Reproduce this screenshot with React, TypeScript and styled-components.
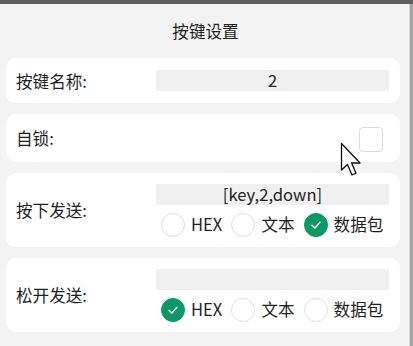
import React from "react";
import styled, { createGlobalStyle } from "styled-components";

const GlobalStyle = createGlobalStyle`
  html, body {
    margin: 0;
    padding: 0;
    background: #f3f3f3;
  }
  body {
    font-family: "Noto Sans CJK SC", "Noto Sans", sans-serif;
    color: #1f1f1f;
  }
`;

const Screen = styled.div`
  position: relative;
  width: 413px;
  height: 346px;
  overflow: hidden;
  display: flex;
  flex-direction: column;
  background: #f3f3f3;
`;

const TopBar = styled.div`
  height: 4px;
  background: #5e5e5e;
  flex-shrink: 0;
`;

const Body = styled.div`
  flex: 1;
  display: flex;
`;

const Content = styled.div`
  flex: 1;
  display: flex;
  flex-direction: column;
`;

const ScrollStrip = styled.div`
  width: 3px;
  background: #a3a3a3;
  border-left: 1px solid #d8d8d8;
`;

const Title = styled.div`
  height: 54px;
  display: flex;
  align-items: center;
  justify-content: center;
  font-size: 16.6px;
  padding-left: 2px;
`;

const CardList = styled.div`
  display: flex;
  flex-direction: column;
  gap: 11px;
  padding: 0 9px 0 6px;
`;

const Card = styled.div<{ $h?: number }>`
  background: #ffffff;
  border-radius: 10px;
  display: flex;
  align-items: center;
  padding: 0 11px 0 10px;
  min-height: ${(p) => (p.$h ? `${p.$h}px` : "auto")};
`;

const Label = styled.div`
  width: 140px;
  flex-shrink: 0;
  font-size: 16.6px;
  line-height: 22px;
`;

const Field = styled.div<{ $stack?: boolean }>`
  flex: 1;
  display: flex;
  flex-direction: column;
  gap: 7px;
  padding: ${(p) => (p.$stack ? "11px 0 10px" : "12px 0")};
`;

const Input = styled.div`
  height: 21px;
  background: #f0f0f0;
  font-size: 16.6px;
  line-height: 21px;
  text-align: center;
  color: #222;
`;

const CheckRow = styled.div`
  flex: 1;
  display: flex;
  justify-content: flex-end;
  padding-right: 6px;
`;

const CheckBox = styled.div`
  width: 22px;
  height: 23px;
  border: 1px solid #dcdcdc;
  border-radius: 4px;
  background: #fff;
  margin-top: 2px;
`;

const RadioGroup = styled.div`
  display: flex;
  align-items: center;
  gap: 9px;
  padding-left: 5px;
`;

const RadioItem = styled.div`
  display: flex;
  align-items: center;
  gap: 6px;
  font-size: 16.6px;
  line-height: 25px;
`;

const Circle = styled.div<{ $on?: boolean }>`
  width: 24px;
  height: 24px;
  border-radius: 50%;
  box-sizing: border-box;
  border: 1px solid ${(p) => (p.$on ? "#0b9a63" : "#dedede")};
  background: ${(p) => (p.$on ? "#0b9a63" : "#fff")};
  display: flex;
  align-items: center;
  justify-content: center;
`;

const Cursor = styled.svg`
  position: absolute;
  left: 340px;
  top: 142px;
`;

const Check = () => (
  <svg width="12" height="12" viewBox="0 0 12 12">
    <path d="M2 6.2 L4.9 9 L10 3.2" fill="none" stroke="#fff" strokeWidth="1.4" strokeLinecap="round" strokeLinejoin="round" />
  </svg>
);

const options = ["HEX", "文本", "数据包"];

const Radios = ({ selected }: { selected: number }) => (
  <RadioGroup>
    {options.map((o, i) => (
      <RadioItem key={o}>
        <Circle $on={i === selected}>{i === selected && <Check />}</Circle>
        {o}
      </RadioItem>
    ))}
  </RadioGroup>
);

export default function App() {
  return (
    <>
      <GlobalStyle />
      <Screen>
        <TopBar />
        <Body>
          <Content>
            <Title>按键设置</Title>
            <CardList>
              <Card>
                <Label>按键名称:</Label>
                <Field>
                  <Input>2</Input>
                </Field>
              </Card>
              <Card $h={48}>
                <Label>自锁:</Label>
                <CheckRow>
                  <CheckBox />
                </CheckRow>
              </Card>
              <Card>
                <Label>按下发送:</Label>
                <Field $stack>
                  <Input>[key,2,down]</Input>
                  <Radios selected={2} />
                </Field>
              </Card>
              <Card>
                <Label>松开发送:</Label>
                <Field $stack>
                  <Input />
                  <Radios selected={0} />
                </Field>
              </Card>
            </CardList>
          </Content>
          <ScrollStrip />
        </Body>
        <Cursor width="24" height="36" viewBox="0 0 24 36">
          <path
            d="M1.5 1.5 L1.5 28 L7.5 22.5 L12 33 L16 31.2 L11.6 21 L20 21 Z"
            fill="#fff"
            stroke="#111"
            strokeWidth="1.3"
            strokeLinejoin="round"
          />
        </Cursor>
      </Screen>
    </>
  );
}
